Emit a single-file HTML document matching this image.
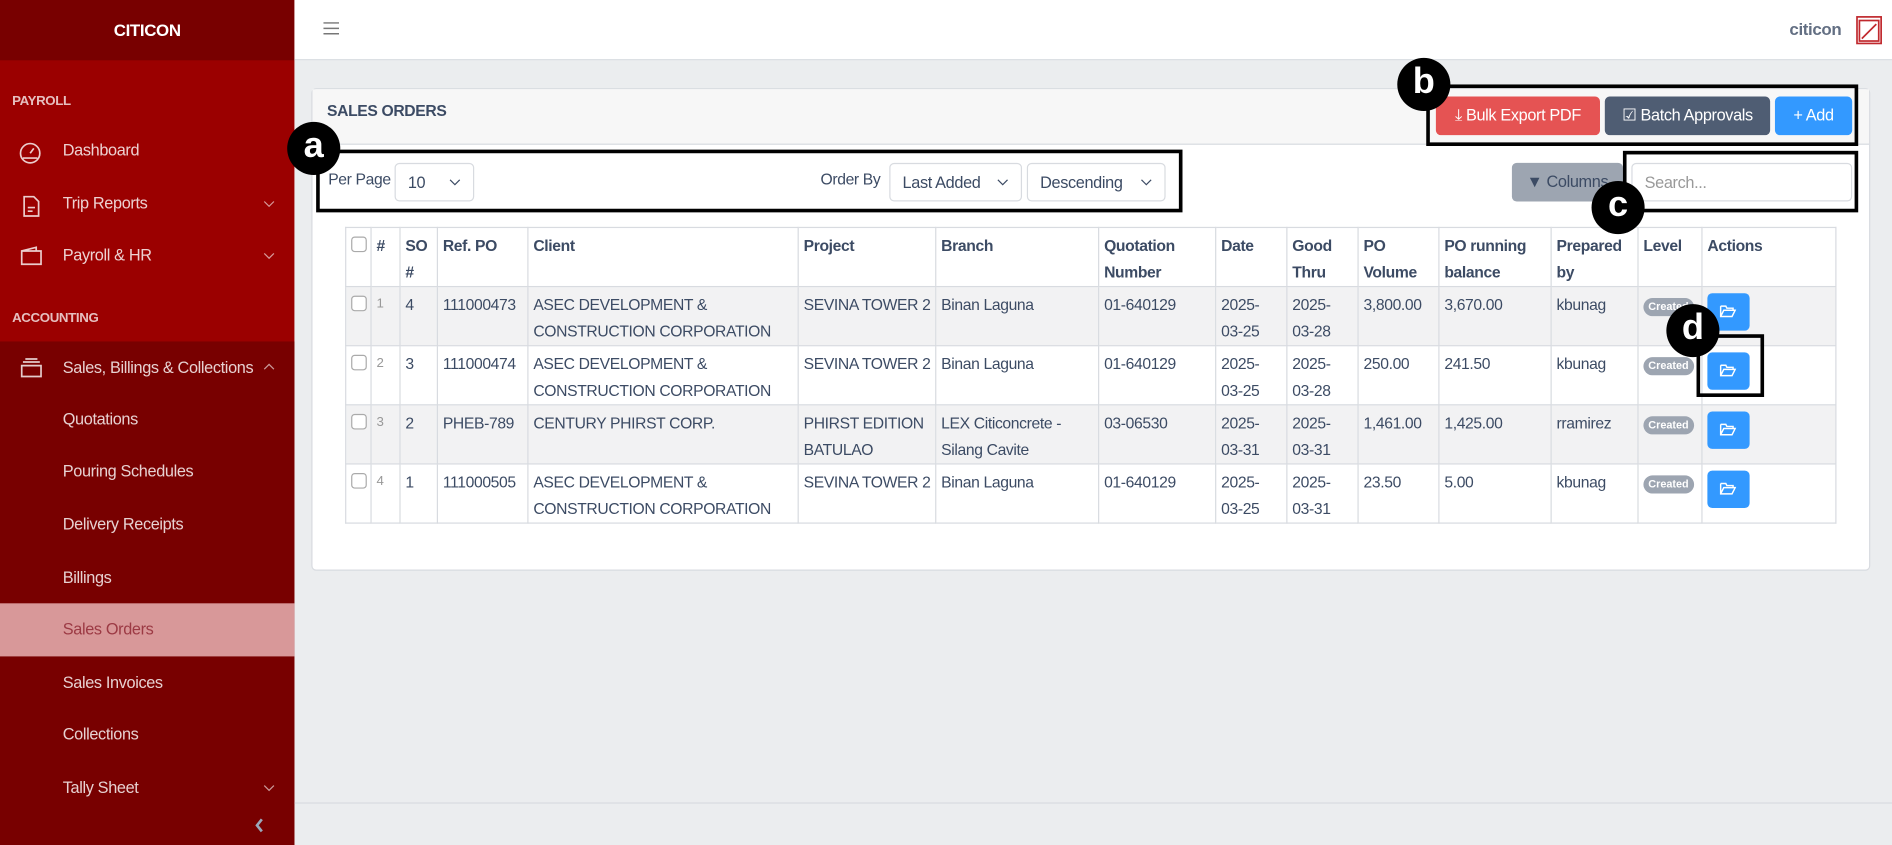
<!DOCTYPE html>
<html><head><meta charset="utf-8"><style>
*{box-sizing:border-box;margin:0;padding:0}
html,body{width:1892px;height:845px;overflow:hidden;background:#ebedef}
#w{width:1568px;height:701px;transform:scale(1.20663);transform-origin:0 0;position:relative;font-family:"Liberation Sans",sans-serif;font-size:13px;letter-spacing:-0.3px;color:#3c4b64}
.a{position:absolute}
#sb{left:0;top:0;width:244px;height:701px;background:#9b0000}
#sbh{left:0;top:0;width:244px;height:50px;background:#780000;color:#fff;font-weight:bold;font-size:14px;text-align:center;line-height:50px}
.sec{color:rgba(255,255,255,.75);font-weight:bold;font-size:11px;left:10px}
.mi{left:52px;color:rgba(255,255,255,.82);font-size:13.5px}
.chev{left:218px}
#sub{left:0;top:283px;width:244px;height:418px;background:#780000}
#act{left:0;top:500px;width:244px;height:44px;background:#d89899}
#top{left:244px;top:0;width:1324px;height:50px;background:#fff;border-bottom:1px solid #d8dbe0}
#card{left:258px;top:73px;width:1292px;height:400px;background:#fff;border:1px solid #d8dbe0;border-radius:4px}
#ch{left:259px;top:74px;width:1290px;height:46px;background:#f7f7f7;border-bottom:1px solid #d8dbe0}
.btn{color:#fff;border-radius:4px;font-size:13.5px;text-align:center;line-height:32px;height:32px}
.sel{border:1px solid #d8dbe0;border-radius:4px;height:32px;line-height:32px;padding-left:10px;font-size:13.5px;color:#3c4b64;background:#fff}
.sel svg{position:absolute;right:10px;top:12px}
.box{border:3px solid #000}
.circ{width:44px;height:44px;border-radius:50%;background:#000;color:#fff;font-weight:bold;font-size:30px;text-align:center;line-height:40px;letter-spacing:0}
table{position:absolute;left:286px;top:188px;border-collapse:collapse;width:1236px;table-layout:fixed}
td,th{border:1px solid #d8dbe0;vertical-align:top;padding:4px 4px 0;line-height:21.5px;text-align:left;font-size:13px;color:#3c4b64;overflow:hidden;white-space:nowrap}
th{font-weight:bold}
tr{height:49px}
tbody tr:nth-child(odd){background:#f2f2f3}
.cb{display:inline-block;width:13px;height:13px;border:1px solid #aaa;border-radius:3px;background:#fff;margin-top:3px}
.n{color:#999;font-size:11px}
.bd{display:inline-block;background:#9da5b1;color:#fff;font-size:9px;font-weight:bold;border-radius:8px;padding:1px 4px;line-height:13px;letter-spacing:0}
.ab{display:inline-block;width:35px;height:31px;background:#39f;border-radius:4px;margin-top:1px;position:relative}
.ab svg{position:absolute;left:10px;top:9px}
</style></head><body><div id="w">
<div id="sb" class="a"></div>
<div id="sub" class="a"></div>
<div id="act" class="a"></div>
<div id="sbh" class="a">CITICON</div>
<div class="a sec" style="top:78px">PAYROLL</div>
<div class="a sec" style="top:258px">ACCOUNTING</div>
<svg class="a" style="left:15px;top:117px" width="20" height="20" viewBox="0 0 20 20" fill="none" stroke="rgba(255,255,255,.8)" stroke-width="1.4"><circle cx="10" cy="10" r="8"/><path d="M4 14h12M10 10l3-4"/></svg>
<svg class="a" style="left:18px;top:161px" width="16" height="20" viewBox="0 0 16 20" fill="none" stroke="rgba(255,255,255,.8)" stroke-width="1.4"><path d="M2 2h8l4 4v12H2zM5 11h6M5 14h4"/></svg>
<svg class="a" style="left:16px;top:203px" width="20" height="18" viewBox="0 0 20 18" fill="none" stroke="rgba(255,255,255,.8)" stroke-width="1.4"><path d="M2 5h16v11H2zM2 5l12-3v3"/></svg>
<svg class="a" style="left:16px;top:296px" width="20" height="18" viewBox="0 0 20 18" fill="none" stroke="rgba(255,255,255,.8)" stroke-width="1.4"><path d="M2 7h16v9H2zM3 4h14M5 1.5h10"/></svg>
<div class="a mi" style="top:117px">Dashboard</div>
<div class="a mi" style="top:161px">Trip Reports</div>
<div class="a mi" style="top:204px">Payroll &amp; HR</div>
<div class="a mi" style="top:297px">Sales, Billings &amp; Collections</div>
<div class="a mi" style="top:340px">Quotations</div>
<div class="a mi" style="top:383px">Pouring Schedules</div>
<div class="a mi" style="top:427px">Delivery Receipts</div>
<div class="a mi" style="top:471px">Billings</div>
<div class="a mi" style="top:514px;color:#9c3a44">Sales Orders</div>
<div class="a mi" style="top:558px">Sales Invoices</div>
<div class="a mi" style="top:601px">Collections</div>
<div class="a mi" style="top:645px">Tally Sheet</div>
<svg class="a chev" style="top:166px" width="10" height="6" viewBox="0 0 10 6" fill="none" stroke="rgba(255,255,255,.6)"><path d="M1 1l4 4 4-4"/></svg>
<svg class="a chev" style="top:209px" width="10" height="6" viewBox="0 0 10 6" fill="none" stroke="rgba(255,255,255,.6)"><path d="M1 1l4 4 4-4"/></svg>
<svg class="a chev" style="top:301px" width="10" height="6" viewBox="0 0 10 6" fill="none" stroke="rgba(255,255,255,.6)"><path d="M1 5l4-4 4 4"/></svg>
<svg class="a chev" style="top:650px" width="10" height="6" viewBox="0 0 10 6" fill="none" stroke="rgba(255,255,255,.6)"><path d="M1 1l4 4 4-4"/></svg>
<svg class="a" style="left:211px;top:678px" width="8" height="12" viewBox="0 0 8 12" fill="none" stroke="#9aa8bb" stroke-width="2.2"><path d="M6 1L2 6l4 5"/></svg>
<div class="a" style="left:244px;top:665px;width:1324px;height:1px;background:#d8dbe0"></div>
<div id="top" class="a"></div>
<svg class="a" style="left:268px;top:18px" width="13" height="11" viewBox="0 0 13 11" stroke="#777" stroke-width="1.2"><path d="M0 1h13M0 5.5h13M0 10h13"/></svg>
<div class="a" style="left:1483px;top:16px;font-weight:bold;color:#636f83;font-size:14px">citicon</div>
<svg class="a" style="left:1538px;top:13px" width="22" height="24" viewBox="0 0 22 24" fill="none" stroke="#c0282d" stroke-width="1.4"><rect x="1" y="1" width="20" height="22"/><rect x="3" y="4" width="16" height="17"/><path d="M5 19L17 7"/></svg>
<div id="card" class="a"></div>
<div id="ch" class="a"></div>
<div class="a" style="left:271px;top:84px;font-weight:bold;font-size:13px;color:#3c4b64">SALES ORDERS</div>
<div class="a btn" style="left:1190px;top:80px;width:136px;background:#e55353">&#10515; Bulk Export PDF</div>
<div class="a btn" style="left:1330px;top:80px;width:137px;background:#4f5d73">&#9745; Batch Approvals</div>
<div class="a btn" style="left:1471px;top:80px;width:64px;background:#39f">+ Add</div>
<div class="a" style="left:272px;top:141px">Per Page</div>
<div class="a sel" style="left:327px;top:135px;width:66px">10<svg width="10" height="6" viewBox="0 0 10 6" fill="none" stroke="#3c4b64"><path d="M1 1l4 4 4-4"/></svg></div>
<div class="a" style="left:680px;top:141px">Order By</div>
<div class="a sel" style="left:737px;top:135px;width:110px">Last Added<svg width="10" height="6" viewBox="0 0 10 6" fill="none" stroke="#3c4b64"><path d="M1 1l4 4 4-4"/></svg></div>
<div class="a sel" style="left:851px;top:135px;width:115px">Descending<svg width="10" height="6" viewBox="0 0 10 6" fill="none" stroke="#3c4b64"><path d="M1 1l4 4 4-4"/></svg></div>
<div class="a btn" style="left:1253px;top:135px;width:92px;background:#9da5b1;color:#3c4b64">&#9660; Columns</div>
<div class="a sel" style="left:1352px;top:135px;width:183px;color:#999">Search...</div>
<table><colgroup><col style="width:21px"><col style="width:24px"><col style="width:31px"><col style="width:75px"><col style="width:224px"><col style="width:114px"><col style="width:135px"><col style="width:97px"><col style="width:59px"><col style="width:59px"><col style="width:67px"><col style="width:93px"><col style="width:72px"><col style="width:53px"><col></colgroup>
<thead><tr>
<th><span class="cb"></span></th><th>#</th><th>SO<br>#</th><th>Ref. PO</th><th>Client</th><th>Project</th><th>Branch</th><th>Quotation<br>Number</th><th>Date</th><th>Good<br>Thru</th><th>PO<br>Volume</th><th>PO running<br>balance</th><th>Prepared<br>by</th><th>Level</th><th>Actions</th></tr></thead>
<tbody>
<tr><td><span class="cb"></span></td><td class="n">1</td><td>4</td><td>111000473</td><td>ASEC DEVELOPMENT &amp;<br>CONSTRUCTION CORPORATION</td><td>SEVINA TOWER 2</td><td>Binan Laguna</td><td>01-640129</td><td>2025-<br>03-25</td><td>2025-<br>03-28</td><td>3,800.00</td><td>3,670.00</td><td>kbunag</td><td><span class="bd">Created</span></td><td><span class="ab"><svg width="14" height="12" viewBox="0 0 16 14" fill="none" stroke="#fff" stroke-width="1.4"><path d="M1 2h5l1 2h6v2M1 2v10h11l3-6H4L1 12"/></svg></span></td></tr>
<tr><td><span class="cb"></span></td><td class="n">2</td><td>3</td><td>111000474</td><td>ASEC DEVELOPMENT &amp;<br>CONSTRUCTION CORPORATION</td><td>SEVINA TOWER 2</td><td>Binan Laguna</td><td>01-640129</td><td>2025-<br>03-25</td><td>2025-<br>03-28</td><td>250.00</td><td>241.50</td><td>kbunag</td><td><span class="bd">Created</span></td><td><span class="ab"><svg width="14" height="12" viewBox="0 0 16 14" fill="none" stroke="#fff" stroke-width="1.4"><path d="M1 2h5l1 2h6v2M1 2v10h11l3-6H4L1 12"/></svg></span></td></tr>
<tr><td><span class="cb"></span></td><td class="n">3</td><td>2</td><td>PHEB-789</td><td>CENTURY PHIRST CORP.</td><td>PHIRST EDITION<br>BATULAO</td><td>LEX Citiconcrete -<br>Silang Cavite</td><td>03-06530</td><td>2025-<br>03-31</td><td>2025-<br>03-31</td><td>1,461.00</td><td>1,425.00</td><td>rramirez</td><td><span class="bd">Created</span></td><td><span class="ab"><svg width="14" height="12" viewBox="0 0 16 14" fill="none" stroke="#fff" stroke-width="1.4"><path d="M1 2h5l1 2h6v2M1 2v10h11l3-6H4L1 12"/></svg></span></td></tr>
<tr><td><span class="cb"></span></td><td class="n">4</td><td>1</td><td>111000505</td><td>ASEC DEVELOPMENT &amp;<br>CONSTRUCTION CORPORATION</td><td>SEVINA TOWER 2</td><td>Binan Laguna</td><td>01-640129</td><td>2025-<br>03-25</td><td>2025-<br>03-31</td><td>23.50</td><td>5.00</td><td>kbunag</td><td><span class="bd">Created</span></td><td><span class="ab"><svg width="14" height="12" viewBox="0 0 16 14" fill="none" stroke="#fff" stroke-width="1.4"><path d="M1 2h5l1 2h6v2M1 2v10h11l3-6H4L1 12"/></svg></span></td></tr>
</tbody></table>
<div class="a box" style="left:262px;top:124px;width:718px;height:52px"></div>
<div class="a box" style="left:1182px;top:70px;width:358px;height:51px"></div>
<div class="a box" style="left:1345px;top:125px;width:195px;height:51px"></div>
<div class="a box" style="left:1406px;top:277px;width:56px;height:52px"></div>
<div class="a circ" style="left:238px;top:101px">a</div>
<div class="a circ" style="left:1158px;top:48px">b</div>
<div class="a circ" style="left:1319px;top:150px">c</div>
<div class="a circ" style="left:1381px;top:252px">d</div>
</div></body></html>
